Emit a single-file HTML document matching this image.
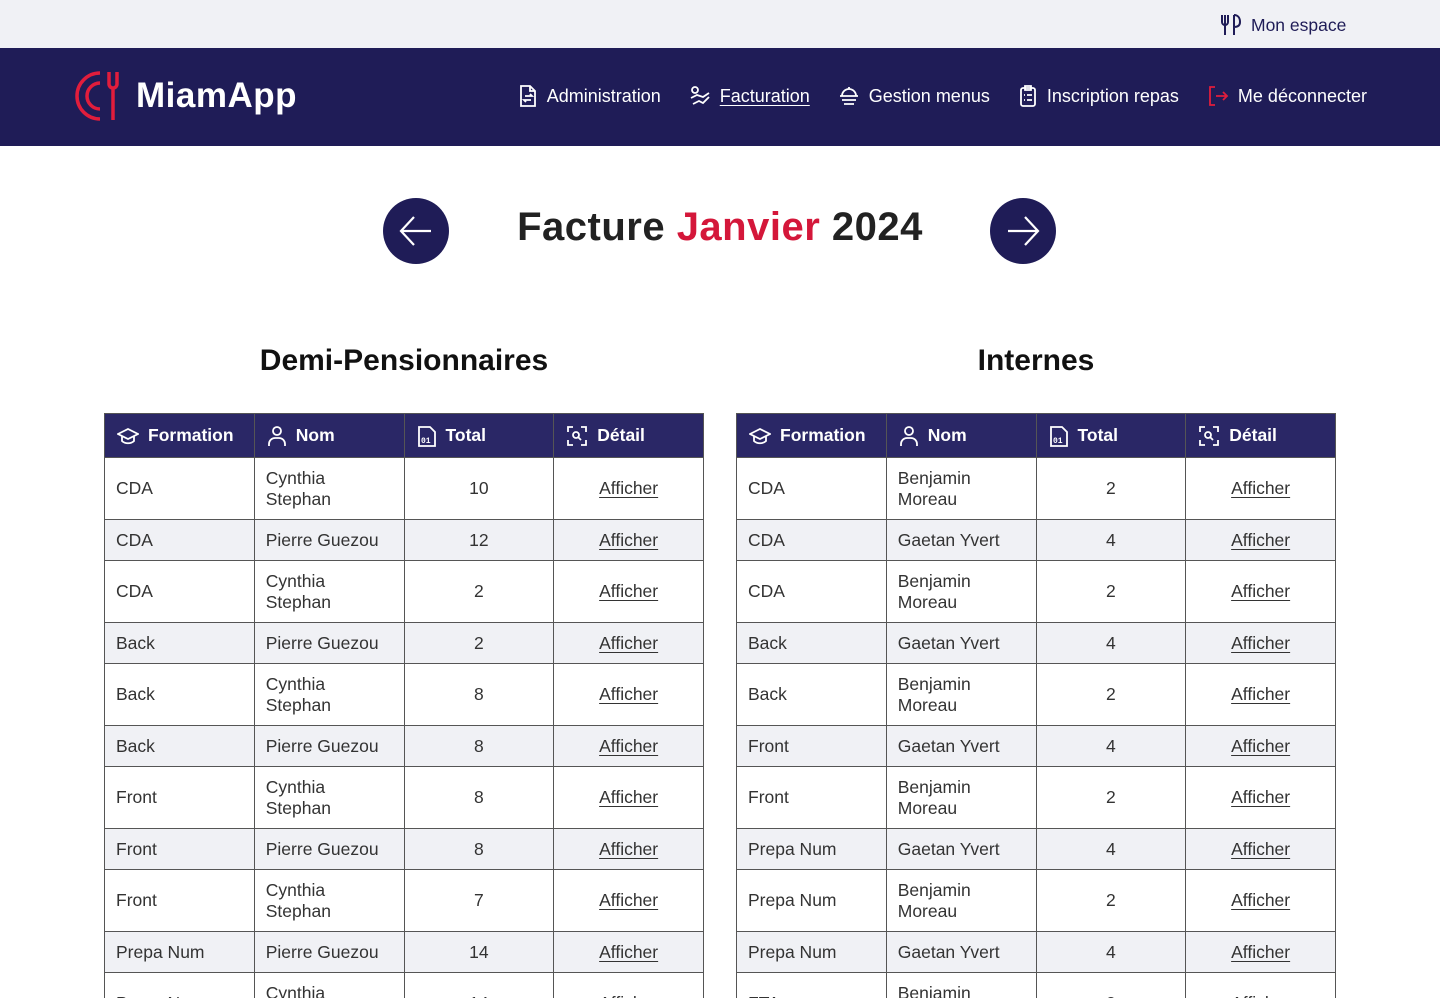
<!DOCTYPE html>
<html><head><meta charset="utf-8">
<style>
*{margin:0;padding:0;box-sizing:border-box}
html{width:1440px;height:998px;overflow:hidden}
body{width:1440px;height:998px;overflow:hidden;background:#fff;font-family:"Liberation Sans",Arial,sans-serif;color:#222;position:relative}
.top{height:48px;background:#f0f1f5;position:relative}
.top .me{position:absolute;left:1220px;top:13px;color:#1f1c57;font-size:17.5px;display:flex;align-items:center;gap:9px}
.nav{height:98px;background:#1f1c57;position:relative}
.logo{position:absolute;left:72px;top:22px;display:flex;align-items:center}
.logo span{color:#fff;font-weight:bold;font-size:35px;margin-left:14px;letter-spacing:0.5px}
.menu{position:absolute;right:73px;top:37px;display:flex;gap:28px;color:#fff;font-size:18px}
.menu div{display:flex;align-items:center;gap:9px}
.menu u{text-decoration:underline;text-underline-offset:3px}
.circ{position:absolute;top:198px;width:66px;height:66px;border-radius:50%;background:#1f1c57}
h1{position:absolute;left:0;width:1440px;top:205px;text-align:center;font-size:40px;font-weight:bold;color:#222;letter-spacing:0.5px}
h1 em{font-style:normal;color:#d4173a}
h2{position:absolute;top:344px;font-size:30px;font-weight:bold;color:#111;text-align:center;width:600px}
table{position:absolute;top:413px;border-collapse:collapse;width:600px;table-layout:fixed;font-size:17.5px}
th{background:#2a2766;color:#fff;height:44px;text-align:left;padding-left:12px;font-size:17.5px;border:1px solid #555;}
th .h{display:flex;align-items:center;gap:9px}
td{border:1px solid #555;padding:0 11px;color:#333;line-height:21px}
tr.t td{height:62px}
tr.s td{height:41px;background:#f0f1f5}
td.c{text-align:center}
td a{color:#333;text-decoration:underline;text-underline-offset:3px}
</style></head><body>
<div class="top"><div class="me"><svg width="22" height="24" viewBox="0 0 22 24" fill="none" stroke="#1f1c57" stroke-width="2"><path d="M2 2v7a3 3 0 0 0 6 0V2M5 2v20M14 2v20M14 2c4 0 6 3 6 7s-3 5-6 5"/></svg>Mon espace</div></div>
<div class="nav">
 <div class="logo"><svg width="50" height="52" viewBox="0 0 50 52" fill="none" stroke="#e11d3c" stroke-width="3.5"><path d="M28 3A23 23 0 1 0 28 49"/><path d="M28 13A13 13 0 1 0 28 39"/><path d="M37 2v12a4 4 0 0 0 8 0V2M41 18v32"/></svg><span>MiamApp</span></div>
 <div class="menu">
  <div><svg width="20" height="22" viewBox="0 0 20 22" fill="none" stroke="#fff" stroke-width="1.8"><path d="M3 1h9l5 5v15H3z M12 1v5h5 M7 11h7l-2-2 M13 15H6l2 2"/></svg>Administration</div>
  <div><svg width="22" height="22" viewBox="0 0 22 22" fill="none" stroke="#fff" stroke-width="1.8"><circle cx="6" cy="5" r="3"/><path d="M2 13l6-3 6 2 6-4M4 19l6-3 4 2 6-6"/></svg><u>Facturation</u></div>
  <div><svg width="22" height="22" viewBox="0 0 22 22" fill="none" stroke="#fff" stroke-width="1.8"><path d="M11 2v2M4 11a7 7 0 0 1 14 0M2 11h18M4 15h14M6 19h10"/></svg>Gestion menus</div>
  <div><svg width="20" height="22" viewBox="0 0 20 22" fill="none" stroke="#fff" stroke-width="1.8"><rect x="3" y="3" width="14" height="18" rx="2"/><path d="M7 1h6v4H7zM6 10h1M9 10h5M6 15h1M9 15h5"/></svg>Inscription repas</div>
  <div><svg width="22" height="22" viewBox="0 0 22 22" fill="none" stroke="#e11d3c" stroke-width="1.8"><path d="M8 2H3v18h5M9 11h11M16 7l4 4-4 4"/></svg>Me déconnecter</div>
 </div>
</div>
<div class="circ" style="left:383px"><svg width="66" height="66" viewBox="0 0 66 66" fill="none" stroke="#fff" stroke-width="2.2"><path d="M18 33h30M31 19L18 33l13 14"/></svg></div>
<div class="circ" style="left:990px"><svg width="66" height="66" viewBox="0 0 66 66" fill="none" stroke="#fff" stroke-width="2.2"><path d="M18 33h30M35 19l13 14-13 14"/></svg></div>
<h1>Facture <em>Janvier</em> 2024</h1>
<h2 style="left:104px">Demi-Pensionnaires</h2>
<h2 style="left:736px">Internes</h2>
<table style="left:104px" id="t1"></table>
<table style="left:736px" id="t2"></table>
<script>
var head='<tr><th><div class="h"><svg width="22" height="18" viewBox="0 0 22 18" fill="none" stroke="#fff" stroke-width="1.8"><path d="M1 7l10-5 10 5-10 5z M5 9v5c3 3 9 3 12 0V9"/></svg>Formation</div></th><th><div class="h"><svg width="20" height="22" viewBox="0 0 20 22" fill="none" stroke="#fff" stroke-width="1.8"><circle cx="10" cy="6" r="4"/><path d="M2 21v-2a6 6 0 0 1 6-6h4a6 6 0 0 1 6 6v2"/></svg>Nom</div></th><th><div class="h"><svg width="20" height="22" viewBox="0 0 20 22" fill="none" stroke="#fff" stroke-width="1.8"><path d="M2 21V2h11l5 5v14z"/><text x="4" y="18" font-size="8" fill="#fff" stroke="none" font-family="Liberation Mono">01</text></svg>Total</div></th><th><div class="h"><svg width="22" height="22" viewBox="0 0 22 22" fill="none" stroke="#fff" stroke-width="1.8"><path d="M2 7V2h5M15 2h5v5M20 15v5h-5M7 20H2v-5"/><circle cx="10" cy="10" r="3"/><path d="M12 12l3 3"/></svg>Détail</div></th></tr>';
function build(id,rows){var h=head;rows.forEach(function(r,i){var t=i%2==0;h+='<tr class="'+(t?'t':'s')+'"><td>'+r[0]+'</td><td>'+(t?r[1].replace(' ','<br>'):r[1])+'</td><td class="c">'+r[2]+'</td><td class="c"><a>Afficher</a></td></tr>';});document.getElementById(id).innerHTML=h;}
var f1=['CDA','CDA','CDA','Back','Back','Back','Front','Front','Front','Prepa Num','Prepa Num'];
var n1=['10','12','2','2','8','8','8','8','7','14','14'];
var r1=[],r2=[];
var f2=['CDA','CDA','CDA','Back','Back','Front','Front','Prepa Num','Prepa Num','Prepa Num','FTA'];
for(var i=0;i<11;i++){var t=i%2==0;r1.push([f1[i],t?'Cynthia Stephan':'Pierre Guezou',n1[i]]);r2.push([f2[i],t?'Benjamin Moreau':'Gaetan Yvert',t?'2':'4']);}
build('t1',r1);build('t2',r2);
</script>
</body></html>
